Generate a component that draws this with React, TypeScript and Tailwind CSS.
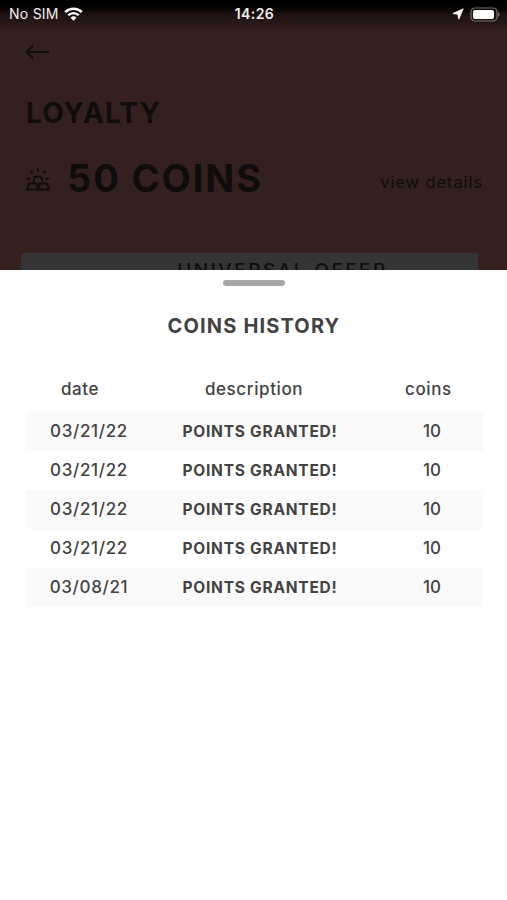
import { clsx } from "clsx";

interface IHistoryItem {
  date: string;
  description: string;
  coins: number;
}

const history: IHistoryItem[] = [
  { date: "03/21/22", description: "POINTS GRANTED!", coins: 10 },
  { date: "03/21/22", description: "POINTS GRANTED!", coins: 10 },
  { date: "03/21/22", description: "POINTS GRANTED!", coins: 10 },
  { date: "03/21/22", description: "POINTS GRANTED!", coins: 10 },
  { date: "03/08/21", description: "POINTS GRANTED!", coins: 10 },
];

function StatusBar() {
  return (
    <div className="grid h-7 shrink-0 grid-cols-3 items-center pl-[9px] pr-[7px] text-[14px] leading-7 text-[#f0eeee]">
      <div className="flex items-center gap-[5px]">
        <span className="tracking-[0.25px]">No SIM</span>
        <svg width="19" height="14" viewBox="0 0 19 14" fill="none">
          <path d="M1.2 5.2a11.8 11.8 0 0 1 16.6 0" stroke="white" strokeWidth="2.5" />
          <path d="M4.2 8.3a7.5 7.5 0 0 1 10.6 0" stroke="white" strokeWidth="2.3" />
          <path d="M6.6 10.7a4.1 4.1 0 0 1 5.8 0L9.5 13.7z" fill="white" />
        </svg>
      </div>
      <span className="text-center font-semibold tracking-[0.4px]">14:26</span>
      <div className="flex items-center justify-end gap-[6px]">
        <svg
          width="12"
          height="12"
          viewBox="0 0 12 12"
          fill="white"
          stroke="white"
          strokeWidth="0.8"
          strokeLinejoin="round"
        >
          <path d="M11.2.8 6.8 11.2 5.800 6.2.8 5.600z" />
        </svg>
        <svg width="30" height="15" viewBox="0 0 30 15" fill="none">
          <rect x="1" y="1" width="26" height="13" rx="4" stroke="#777170" strokeWidth="1.2" />
          <rect x="3" y="3" width="21" height="9" rx="2" fill="white" />
          <path d="M28 5v5c2-.8 2-4.200 0-5z" fill="#777170" />
        </svg>
      </div>
    </div>
  );
}

// rays over one gold bar stacked on two
function CoinsIcon() {
  return (
    <svg
      width="24"
      height="23"
      viewBox="0 0 24 23"
      fill="none"
      stroke="#0f0d0c"
      strokeWidth="1.9"
      strokeLinejoin="round"
    >
      <path d="M3 15.500h7.500L11.800 21.500H1z" />
      <path d="M13.500 15.500H21l2 6H12.200z" />
      <path d="M7 15.500 8.800 8.800h6.400L17 15.500" />
      <path d="M12 .5v3.200M4.500 3.200l2.200 2.200M19.500 3.200l-2.200 2.200M1 10.300l3.500.9M23 10.300l-3.500.9" />
    </svg>
  );
}

function Header() {
  return (
    <div className="flex h-[270px] flex-col overflow-hidden bg-linear-to-b from-black via-[#1b1010] via-[14px] to-[#34201f] to-[32px]">
      <StatusBar />
      <div className="mt-[16px] ml-[25px] shrink-0">
        <svg
          className="block"
          width="25"
          height="16"
          viewBox="0 0 25 16"
          fill="none"
          stroke="#0f0d0c"
          strokeWidth="2"
        >
          <path d="M24 8H2M8 1.500 1.800 8 8 14.500" />
        </svg>
      </div>
      <h1 className="mt-[33px] ml-[26px] shrink-0 text-[28px] leading-10 font-bold tracking-[1.1px] text-[#0f0d0c]">
        LOYALTY
      </h1>
      <div className="mt-[20px] flex h-[50px] shrink-0 items-center pr-[24px] pl-[26px] text-[#0f0d0c]">
        <div className="mt-[2px]">
          <CoinsIcon />
        </div>
        <span className="ml-[17px] text-[38px] leading-none font-bold tracking-[1.900px]">50 COINS</span>
        <span className="mt-[8px] ml-auto text-[16.500px] tracking-[0.9px]">view details</span>
      </div>
      <div className="mt-[50px] mr-[29px] ml-[21px] h-20 shrink-0 rounded-[3px] bg-[#343434] pt-[6px] pl-[66px] text-center text-[19px] leading-6 font-medium tracking-[2.500px] text-[#0f0d0c]">
        UNIVERSAL OFFER
      </div>
    </div>
  );
}

function HistorySheet() {
  return (
    <div className="flex h-[630px] flex-col bg-white text-[#434343]">
      <div className="mt-[10px] ml-[223px] h-[6px] w-[62px] rounded-full bg-[#a6a6a6]" />
      <h2 className="mt-[28px] pl-px text-center text-[20px] leading-6 font-bold tracking-[1.150px]">
        COINS HISTORY
      </h2>
      <div className="mx-[26px] mt-[39px] grid grid-cols-[126px_203px_128px] text-[17px] leading-6 font-medium tracking-[0.600px]">
        <span className="pl-[35px]">date</span>
        <span className="pl-px text-center">description</span>
        <span className="pl-[50px]">coins</span>
      </div>
      <div className="mx-[26px] mt-[11px]">
        {history.map((item, i) => (
          <div
            key={i}
            className={clsx(
              "grid h-[39px] w-[457px] grid-cols-[126px_216px_115px] items-center font-medium",
              i % 2 === 0 && "bg-[#fafafa]"
            )}
          >
            <span className="text-center text-[17px] tracking-[0.650px]">{item.date}</span>
            <span className="text-center text-[15.500px] font-bold tracking-[0.750px]">
              {item.description}
            </span>
            <span className="pl-[55px] text-[17px]">{item.coins}</span>
          </div>
        ))}
      </div>
    </div>
  );
}

export default function App() {
  return (
    <div className="h-[900px] w-[507px] overflow-hidden bg-white font-['Inter','Liberation_Sans',sans-serif]">
      <Header />
      <HistorySheet />
    </div>
  );
}
